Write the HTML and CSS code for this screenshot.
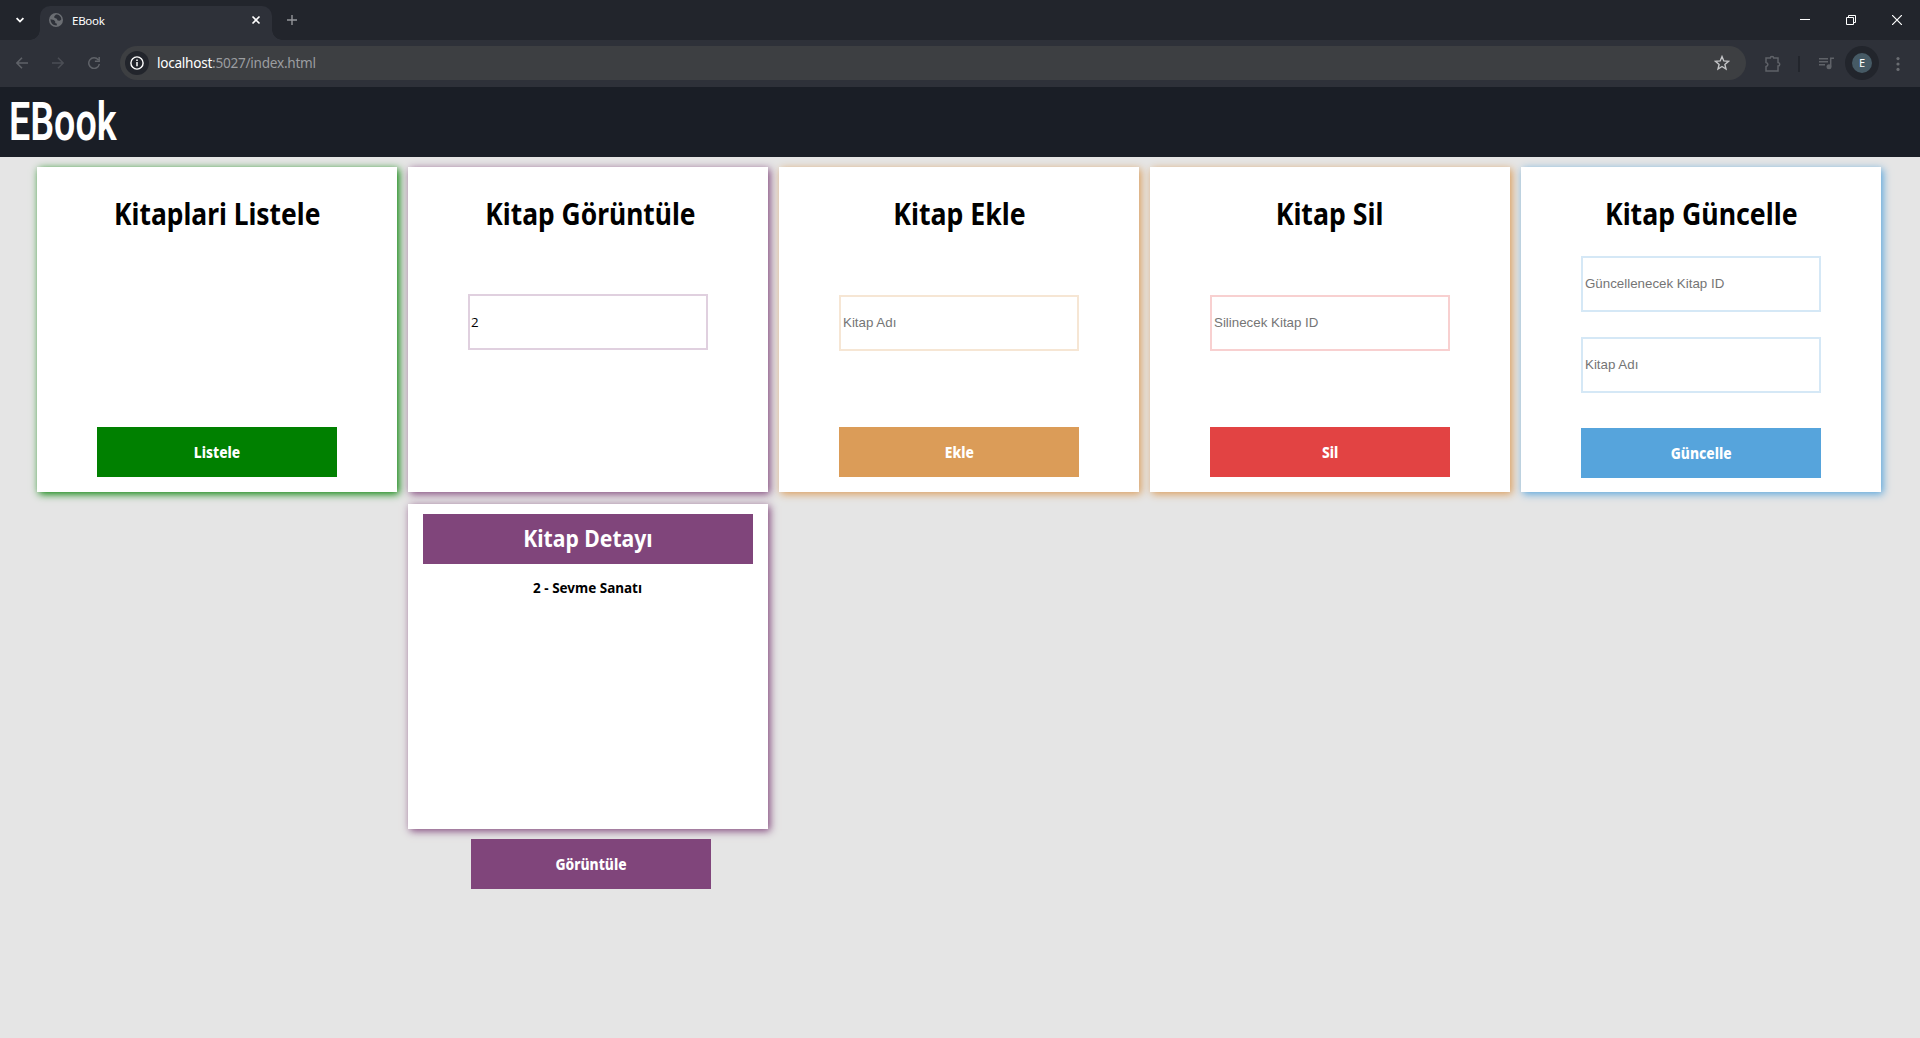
FILE: index.html
```html
<!DOCTYPE html>
<html lang="tr">
<head>
<meta charset="utf-8">
<title>EBook</title>
<link rel="stylesheet" href="styles.css">
</head>
<body>
<div class="tabstrip">
  <svg class="tab-search" width="12" height="12" viewBox="0 0 12 12"><path d="M2.6 4.2 6 7.6l3.4-3.4" fill="none" stroke="#fff" stroke-width="1.8"/></svg>
  <div class="tab">
    <svg width="14" height="14" viewBox="0 0 14 14"><circle cx="7" cy="7" r="7" fill="#6b6e73"/><path d="M7 1.500 5.300 3.300v1.500l2.500 1 .8 1.700 2.200.3 1.500-1.200C12.500 3.600 10 1.500 7 1.500ZM1.500 6.300l3.400.8 1.300 1.500v1.500l1.700.6-.2 1.800C4 12.600 1.500 10 1.500 6.300Z" fill="#2e3139"/></svg>
    <span class="tab-title">EBook</span>
    <svg class="tab-close" width="10" height="10" viewBox="0 0 10 10"><path d="m1.500 1.500 7 7m0-7-7 7" stroke="#fff" stroke-width="1.600"/></svg>
  </div>
  <svg class="tab-new" width="10" height="10" viewBox="0 0 10 10"><path d="M5 0v10M0 5h10" stroke="#94969a" stroke-width="1.400"/></svg>
  <div class="window-buttons">
    <svg width="10" height="11" viewBox="0 0 10 11"><path d="M0 4.500h10" stroke="#fff"/></svg>
    <svg width="10" height="10" viewBox="0 0 10 10"><path d="M.5 2.500h7v7h-7ZM2.500 2.500v-2h7v7h-2" fill="none" stroke="#fff"/></svg>
    <svg width="10" height="10" viewBox="0 0 10 10"><path d="m0 0 10 10M10 0 0 10" stroke="#fff" stroke-width="1.200"/></svg>
  </div>
</div>
<div class="toolbar">
  <div class="nav">
    <svg width="12" height="12" viewBox="0 0 12 12"><path d="M12 6H1M6 .7.900 6 6 11.300" fill="none" stroke="#5f6268" stroke-width="1.500"/></svg>
    <svg width="12" height="12" viewBox="0 0 12 12"><path d="M0 6h11M6 .7 11.100 6 6 11.300" fill="none" stroke="#4b4e55" stroke-width="1.500"/></svg>
    <svg width="12" height="12" viewBox="0 0 12 12"><path d="M10.200 2.800A5.300 5.300 0 1 0 11.300 7M11.200 0v4.300H6.900" fill="none" stroke="#5f6268" stroke-width="1.500"/></svg>
  </div>
  <div class="omnibox">
    <span class="site-info"><svg width="14" height="14" viewBox="0 0 14 14"><circle cx="7" cy="7" r="6.100" fill="none" stroke="#fff" stroke-width="1.400"/><path d="M7 6v4.300M7 3.500v1.500" stroke="#fff" stroke-width="1.500"/></svg></span>
    <span class="url"><b>localhost</b>:5027/index.html</span>
    <svg class="star" width="16" height="16" viewBox="0 0 16 16"><path d="m8 1.600 1.800 4.300 4.700.4-3.600 3.100 1.100 4.600-4-2.500-4 2.500 1.100-4.600L1.500 6.300l4.700-.4Z" fill="none" stroke="#c4c5c7" stroke-width="1.400"/></svg>
  </div>
  <svg class="puzzle" width="18" height="18" viewBox="0 0 18 18"><path d="M2 3h4.300c0-2 3.400-2 3.400 0H14v4.500c2.300 0 2.300 3.500 0 3.500v5H2v-4.500c2.500-.5 2.500-3.500 0-4Z" fill="none" stroke="#5f6268" stroke-width="1.500"/></svg>
  <span class="divider"></span>
  <svg class="media" width="16" height="13" viewBox="0 0 16 13"><path d="M0 1.800h9M0 4.800h9M0 7.800h6M11.700 9.500V1.300H15" fill="none" stroke="#5f6268" stroke-width="1.500"/><circle cx="10" cy="9.800" r="2.500" fill="#5f6268"/></svg>
  <span class="profile"><span class="avatar">E</span></span>
  <svg class="menu" width="4" height="14" viewBox="0 0 4 14" fill="#6a6d72"><circle cx="2" cy="1.600" r="1.600"/><circle cx="2" cy="7" r="1.600"/><circle cx="2" cy="12.400" r="1.600"/></svg>
</div>
<header class="header"><span class="logo">EBook</span></header>
<main class="cards">
  <section class="card list">
    <h2><span>Kitaplari Listele</span></h2>
    <button><span>Listele</span></button>
  </section>
  <div class="column">
    <section class="card view">
      <h2><span>Kitap Görüntüle</span></h2>
      <input type="text" value="2">
    </section>
    <section class="card detail">
      <h3><span>Kitap Detayı</span></h3>
      <p><span>2 - Sevme Sanatı</span></p>
    </section>
    <button class="show"><span>Görüntüle</span></button>
  </div>
  <section class="card add">
    <h2><span>Kitap Ekle</span></h2>
    <input type="text" placeholder="Kitap Adı">
    <button><span>Ekle</span></button>
  </section>
  <section class="card delete">
    <h2><span>Kitap Sil</span></h2>
    <input type="text" placeholder="Silinecek Kitap ID">
    <button><span>Sil</span></button>
  </section>
  <section class="card update">
    <h2><span>Kitap Güncelle</span></h2>
    <input type="text" placeholder="Güncellenecek Kitap ID">
    <input type="text" placeholder="Kitap Adı">
    <button><span>Güncelle</span></button>
  </section>
</main>
</body>
</html>
```
FILE: styles.css
```css
* { box-sizing: border-box; }
body { margin: 0; min-height: 1038px; background: #e5e5e5; font-family: "Noto Sans", sans-serif; }
svg { display: block; flex: none; }

/* browser window */
.tabstrip { display: flex; height: 40px; padding-top: 6px; background: #22252c; }
.tab-search { margin: 8px 14px 0; }
.tab { position: relative; display: flex; align-items: center; width: 232px; height: 34px; padding: 0 11px 6px 9px; background: #2e3139; border-radius: 10px 10px 0 0; }
.tab::before, .tab::after { content: ""; position: absolute; bottom: 0; width: 10px; height: 10px; }
.tab::before { left: -10px; background: radial-gradient(circle at 0 0, transparent 9.5px, #2e3139 10px); }
.tab::after { right: -10px; background: radial-gradient(circle at 100% 0, transparent 9.5px, #2e3139 10px); }
.tab-title { margin-left: 9px; padding-top: 2px; color: #fff; font-size: 11.5px; line-height: 16px; letter-spacing: -.25px; }
.tab-close { margin-left: auto; }
.tab-new { margin: 9px 0 0 15px; }
.window-buttons { display: flex; gap: 36px; margin: 9px 18px 0 auto; }
.toolbar { display: flex; align-items: center; height: 47px; padding: 0 20px 0 16px; background: #2e3139; }
.nav { display: flex; gap: 24px; margin-right: 20px; padding-bottom: 1px; }
.omnibox { display: flex; flex: 1; align-items: center; height: 34px; margin-bottom: 1px; padding: 0 16px 0 5px; border-radius: 17px; background: #3d3f42; }
.site-info { display: grid; place-items: center; width: 24px; height: 24px; border-radius: 50%; background: #22252c; }
.url { margin-left: 8px; color: #9b9da0; font-size: 13.6px; letter-spacing: -.26px; line-height: 20px; }
.url b { color: #fff; font-weight: 400; }
.star { margin-left: auto; }
.puzzle { margin-left: 18px; }
.divider { width: 2px; height: 16px; margin-left: 16px; background: #22252c; }
.media { margin-left: 19px; }
.profile { display: grid; place-items: center; width: 34px; height: 34px; margin: 0 17px 1px 10px; border-radius: 50%; background: #22252c; }
.avatar { display: grid; place-items: center; width: 20px; height: 20px; border-radius: 50%; background: #465a65; color: #fff; font: 11px/20px "Noto Sans", sans-serif; }

/* page */
.header { display: flex; align-items: center; height: 70px; padding-left: 8px; background: #1a1e26; }
.logo { color: #fff; font: 600 53px/62px Roboto, sans-serif; transform: scaleX(.71); transform-origin: left; margin-left: 1px; }
.cards { display: flex; gap: 11px; align-items: flex-start; padding: 10px 37px; }
.column { display: flex; flex-direction: column; }
.card { display: flex; flex-direction: column; align-items: center; width: 360px; height: 325px; padding: 24px 0 15px; background: #fff; box-shadow: 2px 2px 8px var(--shade, var(--color)); }
.list { --color: #008000; }
.column { --color: #80457b; --edge: #e0d0df; }
.add { --color: #db9c58; --edge: #f6e6d4; }
.delete { --color: #e24343; --edge: #f8d0d0; --shade: #db9c58; }
.update { --color: #56a4dc; --edge: #d5e8f6; padding-bottom: 14px; }
h2, h3, p { margin: 0; white-space: nowrap; }
h2 { height: 44px; font-size: 30px; line-height: 46px; }
h2 span, h3 span, p span, button span { display: inline-block; transform: scaleX(.89); }
.list h2 span, .view h2 span { transform: scaleX(.88); }
.view h2 { padding-left: 5px; }
h3 span { transform: scaleX(.9); }
p span { transform: scaleX(.93); }
input { width: 240px; height: 56px; margin-top: 60px; padding: 0 2px 2px; border: 2px solid var(--edge); background: #fff; color: #000; font: 13.333px "Liberation Sans", sans-serif; outline: none; }
input::placeholder { color: #757575; }
.view input { margin-top: 59px; padding: 1px; font-family: "Open Sans", sans-serif; }
.update input { margin-top: 21px; }
.update input + input { margin-top: 25px; }
button { width: 240px; height: 50px; margin-top: auto; padding: 0; border: 0; background: var(--color); color: #fff; font: 800 15.5px/51px "Noto Sans", sans-serif; }
.detail { margin-top: 12px; padding: 10px 15px; }
h3 { width: 100%; height: 50px; background: var(--color); color: #fff; font-size: 23.5px; line-height: 49px; text-align: center; }
p { margin-top: 11px; font-size: 14.5px; font-weight: 700; line-height: 24px; }
.show { margin: 10px 0 0 63px; }
```
